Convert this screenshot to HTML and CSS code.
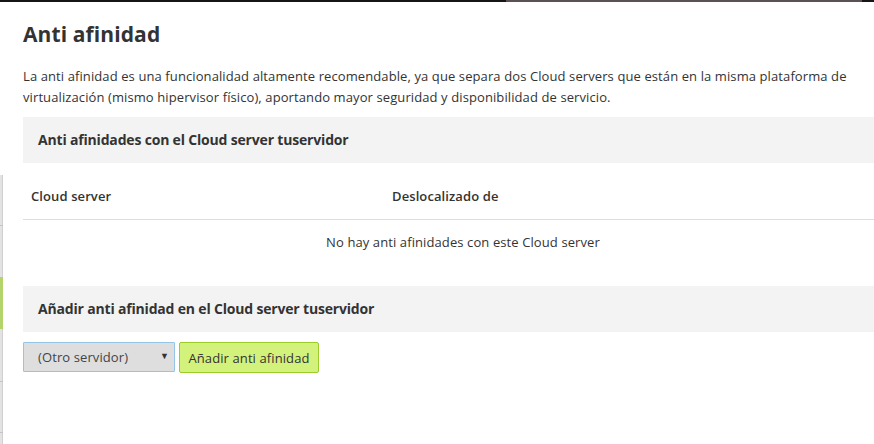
FILE: index.html
```html
<!DOCTYPE html>
<html lang="es">
<head>
<meta charset="utf-8">
<title>Anti afinidad</title>
<link rel="stylesheet" href="styles.css">
</head>
<body>
<div class="topbar"></div>
<div class="stage">
  <div class="behind">
    <div class="bk bk-1"></div>
    <div class="bk bk-2"></div>
    <div class="bk bk-green"></div>
    <div class="bk bk-3"></div>
    <div class="bk bk-4"></div>
    <div class="bk bk-5"></div>
  </div>
  <div class="modal">
    <div class="content">
      <h1 class="title">Anti afinidad</h1>
      <p class="intro">La anti afinidad es una funcionalidad altamente recomendable, ya que separa dos Cloud servers que están en la misma plataforma de virtualización (mismo hipervisor físico), aportando mayor seguridad y disponibilidad de servicio.</p>

      <h2 class="section-head">Anti afinidades con el Cloud server tuservidor</h2>
      <table class="aff-table">
        <thead>
          <tr><th class="col-server">Cloud server</th><th>Deslocalizado de</th></tr>
        </thead>
        <tbody>
          <tr><td class="empty" colspan="2">No hay anti afinidades con este Cloud server</td></tr>
        </tbody>
      </table>

      <h2 class="section-head">Añadir anti afinidad en el Cloud server tuservidor</h2>
      <form class="add-form">
        <div class="select-wrap">
          <select class="select">
            <option>(Otro servidor)</option>
          </select>
          <span class="select-arrow">▼</span>
        </div>
        <button type="button" class="btn-add">Añadir anti afinidad</button>
      </form>
    </div>
  </div>
</div>
</body>
</html>
```
FILE: styles.css
```css
html, body {
  margin: 0;
  padding: 0;
  height: 100%;
  overflow: hidden;
  background: #ffffff;
}

body {
  font-family: "Open Sans", "Liberation Sans", sans-serif;
  color: #333333;
}

.topbar {
  height: 2px;
  background: linear-gradient(to right, #151515 0, #151515 506px, #5a5252 506px, #5a5252 862px, #151515 862px);
}

.stage {
  display: flex;
  height: 442px;
}

.behind {
  width: 3px;
  flex: none;
  padding-top: 173px;
  display: flex;
  flex-direction: column;
  overflow: hidden;
}

.bk {
  background: #e3e3e3;
  border-bottom: 1px solid #c4c4c4;
  box-shadow: inset -1px 0 0 #d0d0d0;
  flex: none;
}

.bk-1 { height: 50px; }
.bk-2 { height: 51px; border-bottom: none; }
.bk-green { height: 52px; background: #b3d46a; border-bottom: none; box-shadow: none; }
.bk-3 { height: 52px; }
.bk-4 { height: 50px; }
.bk-5 { height: 20px; border-bottom: none; }

.modal {
  flex: 1;
  background: #ffffff;
  padding: 19px 0 0 20px;
  overflow: hidden;
}

.content {
  width: 880px;
}

.title {
  margin: 0;
  font-size: 21px;
  line-height: 26px;
  font-weight: 700;
  color: #333333;
  letter-spacing: 0.1px;
}

.intro {
  margin: 19px 0 9px;
  font-size: 13px;
  line-height: 21px;
  letter-spacing: 0.1px;
  color: #333333;
}

.section-head {
  margin: 0;
  background: #f3f3f3;
  height: 46px;
  line-height: 46px;
  padding: 0 15px;
  font-size: 14px;
  font-weight: 700;
  letter-spacing: -0.18px;
  color: #333333;
}

.aff-table {
  width: 100%;
  border-collapse: collapse;
  margin: 10px 0 22px;
  font-size: 13px;
  letter-spacing: 0.1px;
}

.aff-table th {
  text-align: left;
  font-weight: 600;
  padding: 15px 8px;
  line-height: 16px;
  border-bottom: 1px solid #dddddd;
}

.aff-table .col-server {
  width: 345px;
}

.aff-table td {
  padding: 14px 8px;
  line-height: 16px;
}

.aff-table .empty {
  text-align: center;
}

.add-form {
  display: flex;
  gap: 4px;
  margin-top: 10px;
  align-items: flex-start;
}

.select-wrap {
  position: relative;
}

.select {
  appearance: none;
  -webkit-appearance: none;
  width: 152px;
  height: 30px;
  margin: 0;
  padding: 0 24px 0 14px;
  border: 1px solid #92c5e6;
  border-radius: 1px;
  background: #dedede;
  font-family: "Open Sans", "Liberation Sans", sans-serif;
  font-size: 13px;
  letter-spacing: 0.1px;
  color: #444444;
}

.select-arrow {
  position: absolute;
  right: 6px;
  top: 9px;
  font-size: 9px;
  line-height: 10px;
  color: #333333;
  pointer-events: none;
}

.btn-add {
  height: 31px;
  width: 140px;
  margin: 0;
  padding: 0;
  white-space: nowrap;
  border: 1px solid #9ccc2a;
  border-radius: 2px;
  background: #d3f27c;
  font-family: "Open Sans", "Liberation Sans", sans-serif;
  font-size: 13px;
  letter-spacing: 0.1px;
  color: #333333;
}
```
